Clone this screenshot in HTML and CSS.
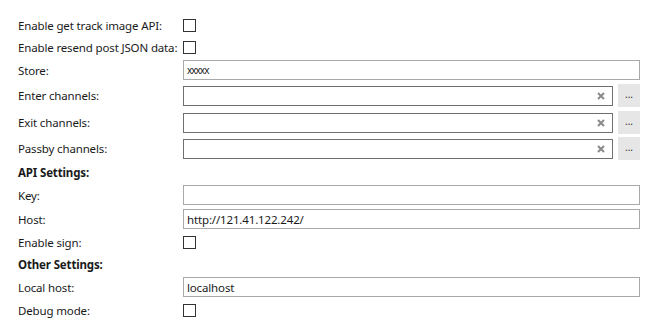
FILE: index.html
```html
<!DOCTYPE html>
<html lang="en">
<head>
    <meta charset="UTF-8">
    <title>Settings</title>
    <link rel="stylesheet" href="styles.css">
</head>
<body>
    <form class="settings">
        <div class="row row-check">
            <label for="track-image">Enable get track image API:</label>
            <input type="checkbox" id="track-image">
        </div>
        <div class="row row-check">
            <label for="resend-json">Enable resend post JSON data:</label>
            <input type="checkbox" id="resend-json">
        </div>
        <div class="row row-text">
            <label for="store">Store:</label>
            <input type="text" id="store" class="small-text" value="xxxxx">
        </div>
        <div class="row row-chan">
            <label for="enter">Enter channels:</label>
            <div class="chan-box">
                <input type="text" id="enter">
                <span class="clear"><svg width="8" height="8" viewBox="0 0 8 8"><path d="M1 1L7 7M7 1L1 7"/></svg></span>
            </div>
            <button type="button" class="browse">...</button>
        </div>
        <div class="row row-chan">
            <label for="exit">Exit channels:</label>
            <div class="chan-box">
                <input type="text" id="exit">
                <span class="clear"><svg width="8" height="8" viewBox="0 0 8 8"><path d="M1 1L7 7M7 1L1 7"/></svg></span>
            </div>
            <button type="button" class="browse">...</button>
        </div>
        <div class="row row-chan last-chan">
            <label for="passby">Passby channels:</label>
            <div class="chan-box">
                <input type="text" id="passby">
                <span class="clear"><svg width="8" height="8" viewBox="0 0 8 8"><path d="M1 1L7 7M7 1L1 7"/></svg></span>
            </div>
            <button type="button" class="browse">...</button>
        </div>

        <div class="row row-head">API Settings:</div>
        <div class="row row-text">
            <label for="key">Key:</label>
            <input type="text" id="key">
        </div>
        <div class="row row-text">
            <label for="host">Host:</label>
            <input type="text" id="host" value="http://121.41.122.242/">
        </div>
        <div class="row row-check">
            <label for="sign">Enable sign:</label>
            <input type="checkbox" id="sign">
        </div>

        <div class="row row-head">Other Settings:</div>
        <div class="row row-text">
            <label for="local-host">Local host:</label>
            <input type="text" id="local-host" value="localhost">
        </div>
        <div class="row row-check">
            <label for="debug">Debug mode:</label>
            <input type="checkbox" id="debug">
        </div>
    </form>
</body>
</html>
```

FILE: styles.css
```css
body {
    margin: 0;
    padding: 14px 18px 0 18px;
    background-color: #fff;
    font-family: "Noto Sans", sans-serif;
    font-size: 11.5px;
    letter-spacing: -0.15px;
    color: #1a1a1a;
}

.row {
    display: flex;
    align-items: center;
}

.row label {
    width: 165px;
    flex: none;
    white-space: nowrap;
}

.row-check {
    height: 22px;
}

.row-text {
    height: 24px;
}

.row-chan {
    height: 27px;
}

.last-chan {
    height: 25px;
}

.row-head {
    height: 22px;
    font-weight: bold;
}

input[type="checkbox"] {
    appearance: none;
    width: 13px;
    height: 13px;
    margin: 0;
    border: 1px solid #333;
    background-color: #fff;
}

input[type="text"] {
    flex: 1;
    height: 20px;
    box-sizing: border-box;
    margin: 0;
    padding: 0 3px;
    border: 1px solid #a9a9a9;
    font-family: inherit;
    font-size: 11.5px;
    letter-spacing: -0.15px;
    color: #1a1a1a;
    outline: none;
}

.small-text {
    font-size: 10px !important;
    letter-spacing: -1px !important;
}

.chan-box {
    flex: 1;
    display: flex;
    align-items: center;
    height: 20px;
    box-sizing: border-box;
    border: 1px solid #6f6f6f;
}

.chan-box input[type="text"] {
    border: none;
    height: 18px;
}

.clear {
    display: flex;
    width: 8px;
    height: 8px;
    margin-right: 7px;
}

.clear path {
    stroke: #8a8a8a;
    stroke-width: 2;
}

.browse {
    width: 22px;
    height: 23px;
    margin-left: 5px;
    padding: 0 0 4px 0;
    border: none;
    background-color: #e6e6e6;
    font-family: inherit;
    font-size: 10px;
    color: #333;
}
```
